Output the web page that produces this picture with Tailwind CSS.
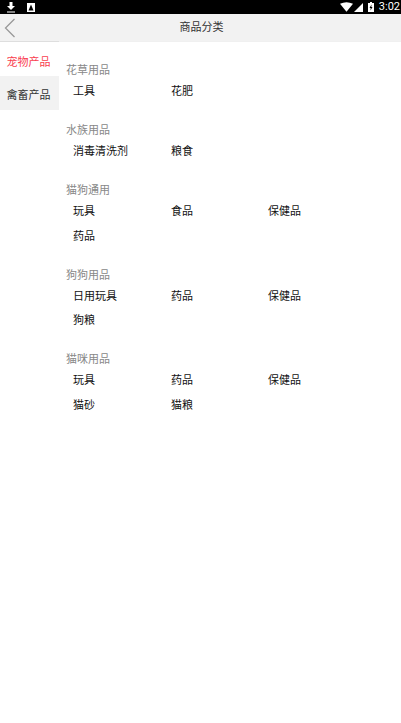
<!DOCTYPE html>
<html lang="zh">
<head>
    <meta charset="UTF-8">
    <meta name="viewport" content="width=device-width, initial-scale=1.0">
    <title>商品分类</title>
    <script src="https://cdn.jsdelivr.net/npm/@tailwindcss/browser@4"></script>
</head>
<body class="w-[401px] h-[723px] bg-white overflow-hidden font-['Roboto','Noto_Sans_CJK_SC',sans-serif]">
    <!-- status bar -->
    <div class="h-[14px] bg-black flex items-center justify-between pl-[6px] pr-[1px] text-white">
        <div class="flex items-center gap-[11px]">
            <svg width="10" height="11" viewBox="0 0 10 11"><path d="M3.500 0h3v4h2.500L5 8 1 4h2.500z M1 9.500h8v1H1z" fill="#fff"/></svg>
            <svg width="8" height="9" viewBox="0 0 8 9"><path d="M0 0h8v9H0z" fill="#fff"/><path d="M4 1.500L6.500 7.500H1.500z" fill="#000"/></svg>
        </div>
        <div class="flex items-center">
            <svg width="13" height="10" viewBox="0 0 14 10" class="mr-[1px]"><path d="M0 1.500Q7-2 14 1.500L7 10z" fill="#fff"/></svg>
            <svg width="9" height="9" viewBox="0 0 10 10" class="mr-[5px]"><path d="M0 10L10 0v10z" fill="#fff"/></svg>
            <svg width="6" height="10" viewBox="0 0 6 10" class="mr-[5px]"><path d="M2 0h2v1h2v9H0V1h2z" fill="#fff"/><path d="M3.500 2.500L1.500 6h1.200L2.500 8.500 4.500 5H3.300z" fill="#000"/></svg>
            <span class="text-[11px] leading-[14px]">3:02</span>
        </div>
    </div>
    <!-- title bar -->
    <div class="relative h-[27px] bg-[#f2f2f2] flex items-center justify-center pl-[2px] pt-[1px] text-[11px] text-[#333]">
        <svg width="12" height="20" viewBox="0 0 12 20" class="absolute left-[4px] top-[4px]"><path d="M10.500 1L1.500 10l9 9" fill="none" stroke="#999" stroke-width="1.300"/></svg>
        商品分类
    </div>
    <div class="flex">
        <!-- side menu -->
        <div class="w-[59px] text-[11px]">
            <div class="h-[35px] flex items-center justify-center pt-[8px] pr-[2px] text-[#f9404f] border-t border-[#dedede]">宠物产品</div>
            <div class="h-[34px] flex items-center justify-center pt-[7px] pr-[2px] bg-[#f2f2f2] text-[#333]">禽畜产品</div>
        </div>
        <!-- categories -->
        <div class="flex-1 pl-[7px] pt-[22px] border-t border-[#f0f0f0] text-[11px]">
            <div class="mb-[20.500px]">
                <div class="h-[15px] leading-[14px] text-[#888]">花草用品</div>
                <div class="grid grid-cols-[98px_97px_98px] pl-[7px] text-[#111]">
                    <div class="h-[24.500px] leading-[25px]">工具</div>
                    <div class="h-[24.500px] leading-[25px]">花肥</div>
                </div>
            </div>
            <div class="mb-[20.500px]">
                <div class="h-[15px] leading-[14px] text-[#888]">水族用品</div>
                <div class="grid grid-cols-[98px_97px_98px] pl-[7px] text-[#111]">
                    <div class="h-[24.500px] leading-[25px]">消毒清洗剂</div>
                    <div class="h-[24.500px] leading-[25px]">粮食</div>
                </div>
            </div>
            <div class="mb-[20.500px]">
                <div class="h-[15px] leading-[14px] text-[#888]">猫狗通用</div>
                <div class="grid grid-cols-[98px_97px_98px] pl-[7px] text-[#111]">
                    <div class="h-[24.500px] leading-[25px]">玩具</div>
                    <div class="h-[24.500px] leading-[25px]">食品</div>
                    <div class="h-[24.500px] leading-[25px]">保健品</div>
                    <div class="h-[24.500px] leading-[25px]">药品</div>
                </div>
            </div>
            <div class="mb-[20.500px]">
                <div class="h-[15px] leading-[14px] text-[#888]">狗狗用品</div>
                <div class="grid grid-cols-[98px_97px_98px] pl-[7px] text-[#111]">
                    <div class="h-[24.500px] leading-[25px]">日用玩具</div>
                    <div class="h-[24.500px] leading-[25px]">药品</div>
                    <div class="h-[24.500px] leading-[25px]">保健品</div>
                    <div class="h-[24.500px] leading-[25px]">狗粮</div>
                </div>
            </div>
            <div>
                <div class="h-[15px] leading-[14px] text-[#888]">猫咪用品</div>
                <div class="grid grid-cols-[98px_97px_98px] pl-[7px] text-[#111]">
                    <div class="h-[24.500px] leading-[25px]">玩具</div>
                    <div class="h-[24.500px] leading-[25px]">药品</div>
                    <div class="h-[24.500px] leading-[25px]">保健品</div>
                    <div class="h-[24.500px] leading-[25px]">猫砂</div>
                    <div class="h-[24.500px] leading-[25px]">猫粮</div>
                </div>
            </div>
        </div>
    </div>
</body>
</html>
